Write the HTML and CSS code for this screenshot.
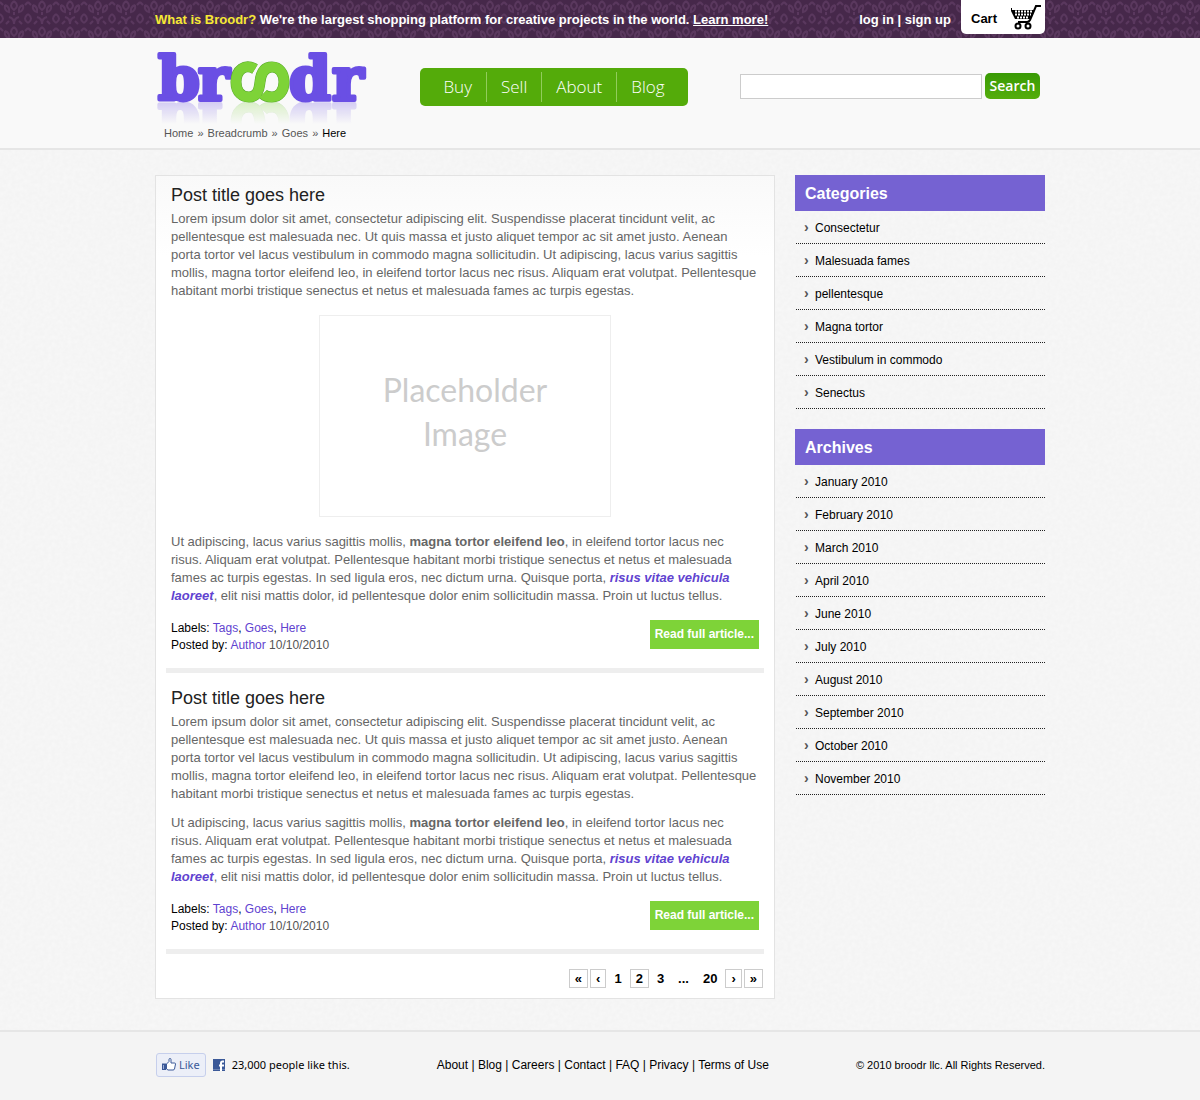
FILE: index.html
```html
<!DOCTYPE html>
<html lang="en">
<head>
<meta charset="utf-8">
<title>Broodr - Blog</title>
<meta name="viewport" content="width=device-width, initial-scale=1">
<link rel="stylesheet" href="styles.css">
</head>
<body>
<div class="topbar">
  <div class="wrap topbar-row">
    <p class="tagline"><span class="tagline-lead">What is Broodr?</span> We're the largest shopping platform for creative projects in the world. <a class="learn" href="#">Learn more!</a></p>
    <p class="account"><a href="#">log in</a> | <a href="#">sign up</a></p>
    <a class="cart" href="#">Cart
      <svg class="cart-icon" width="32" height="26" viewBox="0 0 32 26" aria-hidden="true">
        <path d="M31 2h-5l-6 14q-1 2-3 2H8" fill="none" stroke="#000" stroke-width="2"/>
        <path d="M1 4v3l4 8h15l4-9H2V4z" fill="#000"/>
        <path d="M5 7.500h17M5 10.500h16M7 13.500h12" stroke="#fff" stroke-width="2" stroke-dasharray="2 1"/>
        <circle cx="8" cy="22" r="2.500" fill="none" stroke="#000" stroke-width="2"/>
        <circle cx="18" cy="22" r="2.500" fill="none" stroke="#000" stroke-width="2"/>
      </svg>
    </a>
  </div>
</div>

<header class="header">
  <div class="wrap header-grid">
    <div class="brand">
      <a class="logo" href="#" aria-label="broodr">
        <svg width="212" height="78" viewBox="0 0 212 78">
          <defs>
            <linearGradient id="fade" x1="0" y1="54" x2="0" y2="76" gradientUnits="userSpaceOnUse">
              <stop offset="0" stop-color="#fff" stop-opacity=".26"/>
              <stop offset="1" stop-color="#fff" stop-opacity="0"/>
            </linearGradient>
            <mask id="fade-mask" maskUnits="userSpaceOnUse" x="0" y="54" width="212" height="24"><rect y="54" width="212" height="24" fill="url(#fade)"/></mask>
            <g id="mark">
              <g class="logo-text">
                <text x="3" y="52">b</text>
                <text x="43" y="52">r</text>
                <text x="134" y="52">d</text>
                <text x="177" y="52">r</text>
              </g>
              <path id="rings" d="M100 21C90 15 81 22 81 34C81 45 88 49 94 49C101 49 104 44 105 34C106 24 110 19 117 19C124 19 129 25 129 34C129 43 124 49 117 49C113 49 110 48 108 46" fill="none" stroke="#58a82c" stroke-width="11"/>
              <path d="M100 21C90 15 81 22 81 34C81 45 88 49 94 49C101 49 104 44 105 34C106 24 110 19 117 19C124 19 129 25 129 34C129 43 124 49 117 49C113 49 110 48 108 46" fill="none" stroke="#7ed338" stroke-width="10"/>
            </g>
          </defs>
          <use href="#mark"/>
          <g mask="url(#fade-mask)"><use href="#mark" transform="translate(0 108) scale(1 -1)"/></g>
        </svg>
      </a>
      <nav class="crumbs" aria-label="Breadcrumb"><a href="#">Home</a> <span class="sep">»</span> <a href="#">Breadcrumb</a> <span class="sep">»</span> <a href="#">Goes</a> <span class="sep">»</span> <span class="current">Here</span></nav>
    </div>
    <nav class="mainnav">
      <a href="#">Buy</a><a href="#">Sell</a><a href="#">About</a><a href="#">Blog</a>
    </nav>
    <form class="search">
      <input class="search-box" type="text" aria-label="Search">
      <button class="search-btn" type="button">Search</button>
    </form>
  </div>
</header>

<main class="wrap main">
  <section class="panel">
    <article class="post">
      <h2>Post title goes here</h2>
      <p>Lorem ipsum dolor sit amet, consectetur adipiscing elit. Suspendisse placerat tincidunt velit, ac pellentesque est malesuada nec. Ut quis massa et justo aliquet tempor ac sit amet justo. Aenean porta tortor vel lacus vestibulum in commodo magna sollicitudin. Ut adipiscing, lacus varius sagittis mollis, magna tortor eleifend leo, in eleifend tortor lacus nec risus. Aliquam erat volutpat. Pellentesque habitant morbi tristique senectus et netus et malesuada fames ac turpis egestas.</p>
      <div class="placeholder">Placeholder<br>Image</div>
      <p>Ut adipiscing, lacus varius sagittis mollis, <strong>magna tortor eleifend leo</strong>, in eleifend tortor lacus nec risus. Aliquam erat volutpat. Pellentesque habitant morbi tristique senectus et netus et malesuada fames ac turpis egestas. In sed ligula eros, nec dictum urna. Quisque porta, <a class="em-link" href="#">risus vitae vehicula laoreet</a>, elit nisi mattis dolor, id pellentesque dolor enim sollicitudin massa. Proin ut luctus tellus.</p>
      <div class="post-foot">
        <div class="meta">
          <div>Labels: <a href="#">Tags</a>, <a href="#">Goes</a>, <a href="#">Here</a></div>
          <div>Posted by: <a href="#">Author</a> <span class="date">10/10/2010</span></div>
        </div>
        <a class="read" href="#">Read full article...</a>
      </div>
    </article>
    <article class="post">
      <h2>Post title goes here</h2>
      <p>Lorem ipsum dolor sit amet, consectetur adipiscing elit. Suspendisse placerat tincidunt velit, ac pellentesque est malesuada nec. Ut quis massa et justo aliquet tempor ac sit amet justo. Aenean porta tortor vel lacus vestibulum in commodo magna sollicitudin. Ut adipiscing, lacus varius sagittis mollis, magna tortor eleifend leo, in eleifend tortor lacus nec risus. Aliquam erat volutpat. Pellentesque habitant morbi tristique senectus et netus et malesuada fames ac turpis egestas.</p>
      <p>Ut adipiscing, lacus varius sagittis mollis, <strong>magna tortor eleifend leo</strong>, in eleifend tortor lacus nec risus. Aliquam erat volutpat. Pellentesque habitant morbi tristique senectus et netus et malesuada fames ac turpis egestas. In sed ligula eros, nec dictum urna. Quisque porta, <a class="em-link" href="#">risus vitae vehicula laoreet</a>, elit nisi mattis dolor, id pellentesque dolor enim sollicitudin massa. Proin ut luctus tellus.</p>
      <div class="post-foot">
        <div class="meta">
          <div>Labels: <a href="#">Tags</a>, <a href="#">Goes</a>, <a href="#">Here</a></div>
          <div>Posted by: <a href="#">Author</a> <span class="date">10/10/2010</span></div>
        </div>
        <a class="read" href="#">Read full article...</a>
      </div>
    </article>
    <nav class="pager" aria-label="Pages">
      <a class="boxed" href="#">«</a><a class="boxed" href="#">‹</a><a href="#">1</a><a class="boxed" href="#">2</a><a href="#">3</a><span>...</span><a href="#">20</a><a class="boxed" href="#">›</a><a class="boxed" href="#">»</a>
    </nav>
  </section>

  <aside class="sidebar">
    <section>
      <h3>Categories</h3>
      <ul>
        <li><a href="#">Consectetur</a></li>
        <li><a href="#">Malesuada fames</a></li>
        <li><a href="#">pellentesque</a></li>
        <li><a href="#">Magna tortor</a></li>
        <li><a href="#">Vestibulum in commodo</a></li>
        <li><a href="#">Senectus</a></li>
      </ul>
    </section>
    <section>
      <h3>Archives</h3>
      <ul>
        <li><a href="#">January 2010</a></li>
        <li><a href="#">February 2010</a></li>
        <li><a href="#">March 2010</a></li>
        <li><a href="#">April 2010</a></li>
        <li><a href="#">June 2010</a></li>
        <li><a href="#">July 2010</a></li>
        <li><a href="#">August 2010</a></li>
        <li><a href="#">September 2010</a></li>
        <li><a href="#">October 2010</a></li>
        <li><a href="#">November 2010</a></li>
      </ul>
    </section>
  </aside>
</main>

<footer class="footer">
  <div class="wrap footer-row">
    <div class="social">
      <button class="like" type="button">
        <svg width="14" height="13" viewBox="0 0 14 13" aria-hidden="true">
          <path d="M4.500 6L7 3.500V1.500q0-1 1-1t1 1V5h3.500q1 0 1 1l-1 5q-.3 1-1.500 1H6L4.500 11z" fill="#fff" stroke="#3b5998"/>
          <path d="M0 5.500h4V12H0z" fill="#3b5998"/><path d="M1.500 7v4" stroke="#9fb0d8"/>
        </svg>Like</button>
      <svg width="12" height="12" viewBox="0 0 12 12" aria-hidden="true">
        <path d="M0 0h12v12H0z" fill="#3b5998"/>
        <path d="M0 10.500h12" stroke="#6d84b4"/>
        <path d="M11 2.500H9.500q-1.500 0-1.500 1.500v8M6 6.500h5" fill="none" stroke="#fff" stroke-width="2"/>
      </svg>
      <span>23,000 people like this.</span>
    </div>
    <nav class="footlinks"><a href="#">About</a> | <a href="#">Blog</a> | <a href="#">Careers</a> | <a href="#">Contact</a> | <a href="#">FAQ</a> | <a href="#">Privacy</a> | <a href="#">Terms of Use</a></nav>
    <p class="copy">© 2010 broodr llc. All Rights Reserved.</p>
  </div>
</footer>
</body>
</html>
```
FILE: styles.css
```css
* { box-sizing: border-box; }

body {
  margin: 0;
  background-color: #f4f4f4;
  background-image: url("data:image/svg+xml,%3Csvg xmlns='http://www.w3.org/2000/svg' width='200' height='200'%3E%3Cfilter id='n' x='0' y='0' width='100%25' height='100%25'%3E%3CfeTurbulence type='fractalNoise' baseFrequency='.25' numOctaves='3' stitchTiles='stitch'/%3E%3CfeColorMatrix values='0 0 0 0 1 0 0 0 0 1 0 0 0 0 1 1.500 0 0 0 -.45'/%3E%3C/filter%3E%3Crect width='200' height='200' filter='url(%23n)' opacity='.35'/%3E%3C/svg%3E");
  color: #000;
  font-family: "Liberation Sans", Arial, sans-serif;
  font-size: 13px;
  line-height: 18px;
}

p, h2, h3, ul { margin: 0; padding: 0; }
a { color: inherit; text-decoration: none; }

.wrap {
  max-width: 890px;
  margin: 0 auto;
}

/* top bar */
.topbar {
  background-color: #46284a;
  background-image: url("data:image/svg+xml,%3Csvg xmlns='http://www.w3.org/2000/svg' width='28' height='26'%3E%3Cg fill='none' stroke='%235a385e' stroke-width='2'%3E%3Cpath d='M14 1q-6 5 0 9q6-4 0-9M5 5q5 2 4 7q-5-1-4-7M23 5q-5 2-4 7q5-1 4-7M14 12v3'/%3E%3Cpath d='M0 14q6 5 0 9M28 14q-6 5 0 9M9 17q5 1 5 7M19 17q-5 1-5 7M6 24l3-3M22 24l-3-3M0 2l3 3M28 2l-3 3'/%3E%3C/g%3E%3C/svg%3E");
  color: #fff;
  font-weight: bold;
}
.topbar-row {
  display: flex;
  height: 38px;
}
.tagline, .account { line-height: 40px; }
.tagline { flex: 1; }
.tagline-lead { color: #f6e834; }
.learn { text-decoration: underline; }
.cart {
  display: flex;
  align-items: center;
  justify-content: space-between;
  width: 84px;
  height: 34px;
  margin-left: 10px;
  padding: 4px 3px 0 10px;
  border-radius: 0 0 5px 5px;
  background: #fff;
  color: #000;
}
.cart-icon { margin-bottom: 4px; }

/* header */
.header {
  background: #f9f9f9;
  border-bottom: 2px solid #e6e6e6;
}
.header-grid {
  display: grid;
  grid-template-columns: 265px 268px 1fr;
  align-items: start;
  min-height: 110px;
}
.logo { display: block; height: 78px; margin-top: 10px; margin-bottom: -1px; }
.logo-text {
  font: bold 60px "DejaVu Serif", serif;
  fill: #6a4fe4;
  stroke: #6a4fe4;
  stroke-width: 4;
  stroke-linejoin: round;
}
.crumbs {
  padding-left: 9px;
  color: #555;
  font-size: 11px;
  line-height: 16px;
}
.sep { padding: 0 1px; }
.current { color: #000; }
.mainnav {
  display: flex;
  justify-content: center;
  height: 38px;
  margin-top: 30px;
  padding: 4px 10px;
  border-radius: 5px;
  background: #54ab0a;
  color: #fff;
  font: 300 17px/30px "Open Sans", sans-serif;
}
.mainnav a { padding: 0 14px; }
.mainnav a + a { border-left: 1px solid #92cc5c; }
.search {
  display: flex;
  justify-content: flex-end;
  align-items: center;
  gap: 3px;
  margin: 35px 5px 0 0;
}
.search-box {
  width: 242px;
  height: 25px;
  padding: 0 5px;
  border: 1px solid #ccc;
  background: #fff;
}
.search-btn {
  width: 55px;
  height: 26px;
  padding: 0;
  border: 0;
  border-radius: 5px;
  background: linear-gradient(#389a04, #54ad0c);
  color: #fff;
  font: 600 14px/26px "Open Sans", sans-serif;
}

/* content */
.main {
  display: grid;
  grid-template-columns: minmax(0, 1fr) 250px;
  gap: 20px;
  align-items: start;
  padding: 25px 0 31px;
}
.panel {
  padding: 0 10px 10px;
  border: 1px solid #e3e3e3;
  background: linear-gradient(#f9f9f9, #fff 80px);
}
.post {
  padding: 13px 5px 14px;
  border-bottom: 5px solid #eee;
  color: #666;
}
.post:first-child { padding-top: 7px; }
.post h2 {
  margin-bottom: 3px;
  color: #222;
  font-size: 18px;
  font-weight: normal;
  line-height: 24px;
}
.post p + p { margin-top: 11px; }
.post p:last-of-type { padding-right: 12px; }
.placeholder {
  display: flex;
  align-items: center;
  justify-content: center;
  width: 292px;
  height: 202px;
  margin: 15px auto 16px;
  padding-bottom: 8px;
  border: 1px solid #eee;
  background: #fff;
  color: #ccc;
  font: 32px/44px Lato, sans-serif;
  text-align: center;
}
.em-link { color: #5f43d0; font-weight: bold; font-style: italic; }
.post-foot {
  display: flex;
  justify-content: space-between;
  align-items: flex-start;
  margin-top: 15px;
}
.meta {
  color: #000;
  font-size: 12px;
  line-height: 17px;
}
.meta a { color: #5f43d0; }
.date { color: #555; }
.read {
  padding: 0 5px;
  background: #7ed338;
  color: #fff;
  font-size: 12px;
  font-weight: bold;
  line-height: 29px;
}
.pager {
  display: flex;
  justify-content: flex-end;
  gap: 2px;
  padding: 15px 1px 0 0;
  font-weight: bold;
  line-height: 17px;
}
.pager > * { padding: 0 5px; border: 1px solid transparent; }
.pager .boxed { border-color: #ccc; }

/* sidebar */
.sidebar {
  display: grid;
  gap: 20px;
}
.sidebar h3 {
  padding: 2px 0 0 10px;
  background: #7562d2;
  color: #fff;
  font-size: 16px;
  line-height: 34px;
}
.sidebar ul { padding-left: 1px; list-style: none; }
.sidebar li {
  padding: 2px 0 0 8px;
  border-bottom: 1px dotted #222;
  font-size: 12px;
  line-height: 30px;
}
.sidebar li::before {
  content: "›";
  display: inline-block;
  width: 11px;
  color: #555;
  font-size: 14px;
  font-weight: bold;
  line-height: 16px;
}

/* footer */
.footer {
  padding-bottom: 4px;
  border-top: 2px solid #e6e6e6;
  background: #f4f4f4;
}
.footer-row {
  display: flex;
  justify-content: space-between;
  align-items: center;
  min-height: 65px;
  font-size: 12px;
}
.social {
  display: flex;
  align-items: center;
  gap: 7px;
  padding-left: 1px;
  font: 11px/16px "Noto Sans", sans-serif;
}
.like {
  display: flex;
  align-items: center;
  gap: 3px;
  height: 24px;
  padding: 0 5px;
  border: 1px solid #c6cfec;
  border-radius: 3px;
  background: #eceff8;
  color: #3b5998;
  font: 11px/16px "Noto Sans", sans-serif;
}
.copy { font-size: 11px; }
```
